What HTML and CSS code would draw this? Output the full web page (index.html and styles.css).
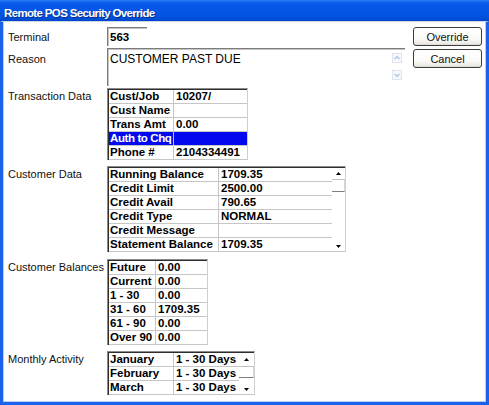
FILE: index.html
```html
<!DOCTYPE html>
<html>
<head>
<meta charset="utf-8">
<link rel="stylesheet" href="styles.css">
</head>
<body>
<div class="win">
  <div class="titlebar"><span class="title">Remote POS Security Override</span></div>
  <div class="client">
    <div class="top">
      <div class="fields">
        <div class="row r-term">
          <div class="lbl">Terminal</div>
          <div class="input term">563</div>
        </div>
        <div class="row r-reason">
          <div class="lbl lbl-reason">Reason</div>
          <div class="input reason">
            <span class="reason-text">CUSTOMER PAST DUE</span>
            <div class="rs">
              <svg class="rs-btn" width="10" height="10" viewBox="0 0 10 10"><rect x="0.5" y="0.5" width="9" height="9" fill="#f5f8fc" stroke="#dde4ee"/><path d="M2.5 6.2 L5 3.7 L7.5 6.2" fill="none" stroke="#a6bddf" stroke-width="1.2"/></svg>
              <svg class="rs-btn" width="10" height="10" viewBox="0 0 10 10"><rect x="0.5" y="0.5" width="9" height="9" fill="#f5f8fc" stroke="#dde4ee"/><path d="M2.5 3.8 L5 6.3 L7.5 3.8" fill="none" stroke="#a6bddf" stroke-width="1.2"/></svg>
            </div>
          </div>
        </div>
      </div>
      <div class="buttons">
        <button class="btn">Override</button>
        <button class="btn">Cancel</button>
      </div>
    </div>

    <div class="row sec sec-trans">
      <div class="lbl lbl-grid">Transaction Data</div>
      <div class="gframe">
        <div class="gbody">
          <div class="grid g-trans">
            <div class="c l">Cust/Job</div><div class="c v">10207/</div>
            <div class="c l">Cust Name</div><div class="c v"></div>
            <div class="c l">Trans Amt</div><div class="c v">0.00</div>
            <div class="c l sel tight">Auth to Chq</div><div class="c v sel"></div>
            <div class="c l">Phone #</div><div class="c v">2104334491</div>
          </div>
        </div>
      </div>
    </div>

    <div class="row sec sec-cust">
      <div class="lbl lbl-grid">Customer Data</div>
      <div class="gframe">
        <div class="gbody">
          <div class="grid g-cust">
            <div class="c l">Running Balance</div><div class="c v">1709.35</div>
            <div class="c l">Credit Limit</div><div class="c v">2500.00</div>
            <div class="c l">Credit Avail</div><div class="c v">790.65</div>
            <div class="c l">Credit Type</div><div class="c v">NORMAL</div>
            <div class="c l">Credit Message</div><div class="c v"></div>
            <div class="c l">Statement Balance</div><div class="c v">1709.35</div>
          </div>
          <div class="sb sb-c">
            <div class="sb-up"><svg width="5" height="3" viewBox="0 0 5 3"><polygon points="0,3 5,3 2.5,0" fill="#000"/></svg></div>
            <div class="sb-thumb"></div>
            <div class="sb-fill"></div>
            <div class="sb-down"><svg width="5" height="3" viewBox="0 0 5 3"><polygon points="0,0 5,0 2.5,3" fill="#000"/></svg></div>
          </div>
        </div>
      </div>
    </div>

    <div class="row sec sec-bal">
      <div class="lbl lbl-grid">Customer Balances</div>
      <div class="gframe">
        <div class="gbody">
          <div class="grid g-bal">
            <div class="c l">Future</div><div class="c v">0.00</div>
            <div class="c l">Current</div><div class="c v">0.00</div>
            <div class="c l">1 - 30</div><div class="c v">0.00</div>
            <div class="c l">31 - 60</div><div class="c v">1709.35</div>
            <div class="c l">61 - 90</div><div class="c v">0.00</div>
            <div class="c l">Over 90</div><div class="c v">0.00</div>
          </div>
        </div>
      </div>
    </div>

    <div class="row sec sec-month">
      <div class="lbl lbl-grid">Monthly Activity</div>
      <div class="gframe">
        <div class="gbody">
          <div class="grid g-month">
            <div class="c l">January</div><div class="c v">1 - 30 Days</div>
            <div class="c l">February</div><div class="c v">1 - 30 Days</div>
            <div class="c l">March</div><div class="c v">1 - 30 Days</div>
          </div>
          <div class="sb sb-m">
            <div class="sb-up"><svg width="5" height="3" viewBox="0 0 5 3"><polygon points="0,3 5,3 2.5,0" fill="#000"/></svg></div>
            <div class="sb-thumb"></div>
            <div class="sb-fill"></div>
            <div class="sb-down"><svg width="5" height="3" viewBox="0 0 5 3"><polygon points="0,0 5,0 2.5,3" fill="#000"/></svg></div>
          </div>
        </div>
      </div>
    </div>
  </div>
</div>
</body>
</html>
```

FILE: styles.css
```css
* { box-sizing: border-box; }

html, body {
  margin: 0;
  padding: 0;
  background: #ffffff;
}

body {
  font-family: "Liberation Sans", Arial, sans-serif;
  color: #000;
}

.win {
  width: 489px;
  height: 405px;
  display: flex;
  flex-direction: column;
  overflow: hidden;
}

.titlebar {
  height: 21px;
  flex: none;
  padding: 2px 0 0 4px;
  line-height: 19px;
  background: linear-gradient(180deg, #2c80f6 0%, #0e62ee 10%, #0658e8 25%, #0455e6 60%, #024fdc 85%, #0046c9 100%);
}

.title {
  color: #fff;
  font-weight: bold;
  font-size: 11.5px;
  letter-spacing: -0.65px;
  text-shadow: 1px 1px 0 #0a2e8a;
}

.client {
  flex: 1;
  background: #fff;
  border-top: 1px solid #cfd6e2;
  border-left: 3px solid #1a62ec;
  border-right: 3px solid #1a62ec;
  border-bottom: 3px solid #1a62ec;
  box-shadow: inset 1px 0 0 #b9cdf3, inset -1px 0 0 #b9cdf3, inset 0 -1px 0 #b9cdf3;
  padding: 5px 4px 0 5px;
}

.top {
  display: flex;
}

.fields {
  flex: 1;
  display: flex;
  flex-direction: column;
}

.row {
  display: flex;
}

.lbl {
  width: 99px;
  flex: none;
  font-size: 11px;
  color: #111;
  white-space: nowrap;
}

.r-term {
  height: 19px;
  align-items: center;
}

.r-reason {
  margin-top: 2px;
  height: 38px;
}

.lbl-reason {
  padding-top: 5px;
  line-height: 13px;
}

.input {
  border-top: 1px solid #7c7c7c;
  border-left: 1px solid #7c7c7c;
  box-shadow: inset 1px 1px 0 #c4c4c4;
  background: #fff;
}

.term {
  width: 40px;
  height: 19px;
  padding-left: 2px;
  font-weight: bold;
  font-size: 11.5px;
  line-height: 18px;
}

.reason {
  width: 298px;
  height: 38px;
  display: flex;
}

.reason-text {
  flex: 1;
  padding: 3px 0 0 2px;
  font-size: 12px;
  line-height: 14px;
}

.rs {
  display: flex;
  flex-direction: column;
  gap: 7px;
  padding-top: 4px;
  margin-right: 3px;
}

.rs-btn {
  display: block;
}

.buttons {
  width: 69px;
  margin-left: 8px;
  display: flex;
  flex-direction: column;
  gap: 3px;
}

.btn {
  width: 69px;
  height: 19px;
  margin: 0;
  padding: 0;
  border: 1px solid #3c3c3c;
  border-radius: 3px;
  background: linear-gradient(180deg, #ffffff 0%, #fbfbf9 60%, #ecebe6 90%, #d8d7d0 100%);
  font-family: "Liberation Sans", Arial, sans-serif;
  font-size: 11px;
  color: #111;
  line-height: 16px;
}

.sec-trans { margin-top: 2px; }
.sec-cust { margin-top: 6px; }
.sec-bal { margin-top: 7px; }
.sec-month { margin-top: 6px; }

.lbl-grid {
  padding-top: 2px;
  line-height: 13px;
}

.gframe {
  border-top: 1px solid #8a8a8a;
  border-left: 1px solid #8a8a8a;
  border-right: 1px solid #cfcfcf;
  align-self: flex-start;
}

.gbody {
  display: flex;
  border-top: 1px solid #2e2e2e;
  border-left: 1px solid #2e2e2e;
  background: #fff;
}

.grid {
  display: grid;
}

.g-trans { grid-template-columns: 65px 73px; }
.g-cust { grid-template-columns: 110px 113px; }
.g-bal { grid-template-columns: 47px 51px; }
.g-month { grid-template-columns: 65px 65px; }

.c {
  height: 14px;
  line-height: 13px;
  border-bottom: 1px solid #c6c6c6;
  font-weight: bold;
  font-size: 11.5px;
  white-space: nowrap;
  overflow: hidden;
}

.l {
  padding-left: 1px;
  border-right: 1px solid #c6c6c6;
}

.v {
  padding-left: 2px;
}

.tight {
  letter-spacing: -0.4px;
}

.sel {
  background: #0408ee;
  color: #fff;
}

.sb {
  display: flex;
  flex-direction: column;
  border-bottom: 1px solid #c6c6c6;
}

.sb-c { width: 13px; }
.sb-m { width: 15px; }

.sb-up {
  height: 11px;
  display: flex;
  align-items: center;
  justify-content: center;
}

.sb-m .sb-up {
  height: 13px;
}

.sb-up svg, .sb-down svg {
  display: block;
}

.sb-thumb {
  height: 13px;
  border-top: 1px solid #c2c2c2;
  border-bottom: 1px solid #7e7e7e;
  border-right: 1px solid #d6d6d6;
}

.sb-m .sb-thumb {
  height: 12px;
}

.sb-fill {
  flex: 1;
}

.sb-down {
  height: 10px;
  display: flex;
  align-items: center;
  justify-content: center;
}
```
